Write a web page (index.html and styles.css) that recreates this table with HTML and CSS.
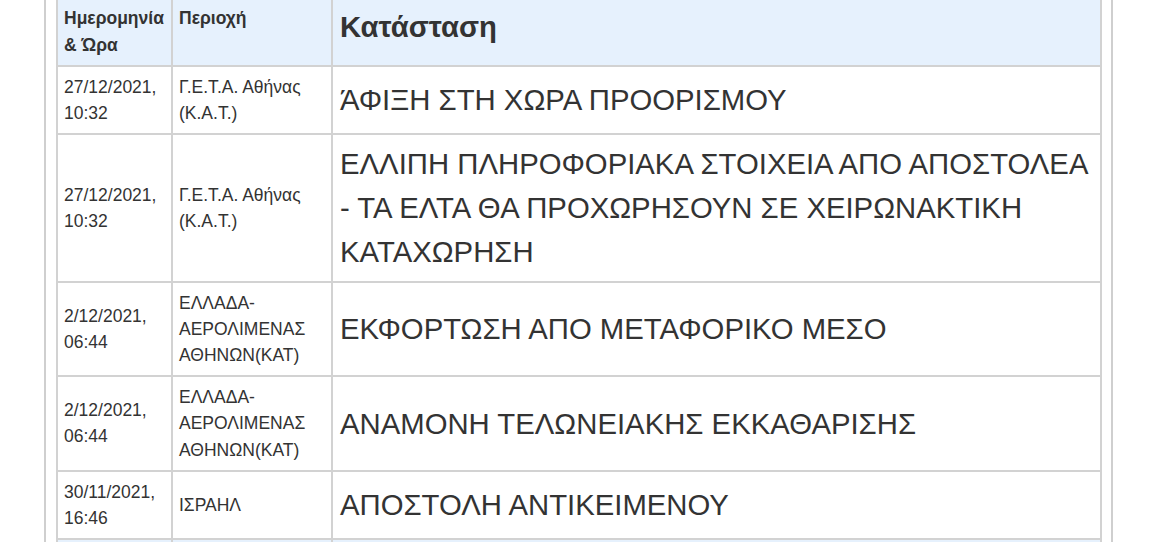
FILE: index.html
```html
<!DOCTYPE html>
<html lang="el">
<head>
<meta charset="utf-8">
<title>Ιστορικό αποστολής</title>
<link rel="stylesheet" href="styles.css">
</head>
<body>
<div class="frame">
  <table class="track">
    <colgroup>
      <col class="c-date">
      <col class="c-area">
      <col class="c-status">
    </colgroup>
    <thead>
      <tr>
        <th class="small">Ημερομηνία &amp; Ώρα</th>
        <th class="small">Περιοχή</th>
        <th class="big">Κατάσταση</th>
      </tr>
    </thead>
    <tbody>
      <tr>
        <td class="small">27/12/2021, 10:32</td>
        <td class="small">Γ.Ε.Τ.Α. Αθήνας (Κ.Α.Τ.)</td>
        <td class="big">ΆΦΙΞΗ ΣΤΗ ΧΩΡΑ ΠΡΟΟΡΙΣΜΟΥ</td>
      </tr>
      <tr>
        <td class="small">27/12/2021, 10:32</td>
        <td class="small">Γ.Ε.Τ.Α. Αθήνας (Κ.Α.Τ.)</td>
        <td class="big">ΕΛΛΙΠΗ ΠΛΗΡΟΦΟΡΙΑΚΑ ΣΤΟΙΧΕΙΑ ΑΠΟ ΑΠΟΣΤΟΛΕΑ - ΤΑ ΕΛΤΑ ΘΑ ΠΡΟΧΩΡΗΣΟΥΝ ΣΕ ΧΕΙΡΩΝΑΚΤΙΚΗ ΚΑΤΑΧΩΡΗΣΗ</td>
      </tr>
      <tr>
        <td class="small">2/12/2021, 06:44</td>
        <td class="small">ΕΛΛΑΔΑ-ΑΕΡΟΛΙΜΕΝΑΣ ΑΘΗΝΩΝ(ΚΑΤ)</td>
        <td class="big">ΕΚΦΟΡΤΩΣΗ ΑΠΟ ΜΕΤΑΦΟΡΙΚΟ ΜΕΣΟ</td>
      </tr>
      <tr>
        <td class="small">2/12/2021, 06:44</td>
        <td class="small">ΕΛΛΑΔΑ-ΑΕΡΟΛΙΜΕΝΑΣ ΑΘΗΝΩΝ(ΚΑΤ)</td>
        <td class="big">ΑΝΑΜΟΝΗ ΤΕΛΩΝΕΙΑΚΗΣ ΕΚΚΑΘΑΡΙΣΗΣ</td>
      </tr>
      <tr>
        <td class="small">30/11/2021, 16:46</td>
        <td class="small">ΙΣΡΑΗΛ</td>
        <td class="big">ΑΠΟΣΤΟΛΗ ΑΝΤΙΚΕΙΜΕΝΟΥ</td>
      </tr>
    </tbody>
    <tfoot>
      <tr class="foot">
        <td></td><td></td><td></td>
      </tr>
    </tfoot>
  </table>
</div>
</body>
</html>
```

FILE: styles.css
```css
html, body {
  margin: 0;
  padding: 0;
  background: #ffffff;
}

body {
  font-family: "Liberation Sans", Arial, sans-serif;
  color: #333333;
  overflow: hidden;
}

.frame {
  margin: -4px 0 0 44px;
  width: 1045px;
  padding: 0 10px;
  border-left: 2px solid #cfcfcf;
  border-right: 2px solid #cfcfcf;
}

.track {
  border-collapse: collapse;
  width: 1046px;
  table-layout: fixed;
  border: 2px solid #d2d2d2;
}

.c-date { width: 115px; }
.c-area { width: 160px; }

.track th,
.track td {
  border: 2px solid #d2d2d2;
  padding: 7px 6px;
  vertical-align: middle;
  text-align: left;
}

.track thead th {
  background: #e6f1fd;
  font-weight: bold;
  padding-top: 7px;
  padding-bottom: 6px;
}

.small {
  font-size: 17.5px;
  line-height: 26.2px;
}

th.small {
  vertical-align: top;
  line-height: 27px;
}

.big {
  font-size: 29.3px;
  line-height: 43.7px;
}

td.big {
  padding-left: 7px;
}

.track th.big {
  padding-left: 7px;
  padding-top: 11px;
  vertical-align: top;
  line-height: 36px;
}

.foot td {
  background: #e6f1fd;
  height: 20px;
  padding: 0;
}
```
